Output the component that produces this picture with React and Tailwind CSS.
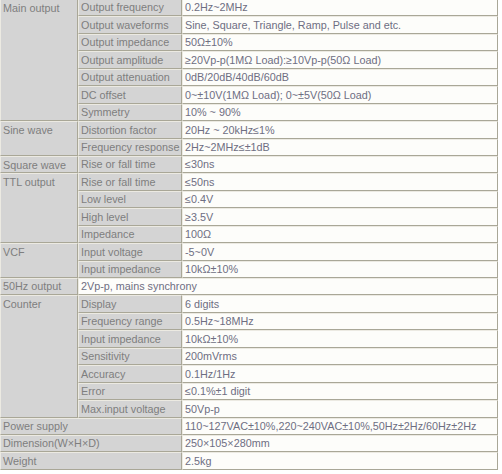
const cell =
  "border border-t-[#eceae2] border-l-[#eceae2] border-b-[#a9a797] border-r-[#a9a797] px-[2px] py-0 align-middle whitespace-nowrap overflow-hidden";
const grey = `${cell} bg-[#d4d4d4] text-[#7e7e7e]`;
const white = `${cell} bg-[#fdfdfa] text-[#6e6e82]`;

const groups = [
  {
    name: "Main output",
    rows: [
      ["Output frequency", "0.2Hz~2MHz"],
      ["Output waveforms", "Sine, Square, Triangle, Ramp, Pulse and etc."],
      ["Output impedance", "50Ω±10%"],
      ["Output amplitude", "≥20Vp-p(1MΩ Load):≥10Vp-p(50Ω Load)"],
      ["Output attenuation", "0dB/20dB/40dB/60dB"],
      ["DC offset", "0~±10V(1MΩ Load); 0~±5V(50Ω Load)"],
      ["Symmetry", "10% ~ 90%"],
    ],
  },
  {
    name: "Sine wave",
    rows: [
      ["Distortion factor", "20Hz ~ 20kHz≤1%"],
      ["Frequency response", "2Hz~2MHz≤±1dB"],
    ],
  },
  { name: "Square wave", rows: [["Rise or fall time", "≤30ns"]] },
  {
    name: "TTL output",
    rows: [
      ["Rise or fall time", "≤50ns"],
      ["Low level", "≤0.4V"],
      ["High level", "≥3.5V"],
      ["Impedance", "100Ω"],
    ],
  },
  {
    name: "VCF",
    rows: [
      ["Input voltage", "-5~0V"],
      ["Input impedance", "10kΩ±10%"],
    ],
  },
  { name: "50Hz output", wide: "2Vp-p, mains synchrony" },
  {
    name: "Counter",
    rows: [
      ["Display", "6 digits"],
      ["Frequency range", "0.5Hz~18MHz"],
      ["Input impedance", "10kΩ±10%"],
      ["Sensitivity", "200mVrms"],
      ["Accuracy", "0.1Hz/1Hz"],
      ["Error", "≤0.1%±1 digit"],
      ["Max.input voltage", "50Vp-p"],
    ],
  },
];

const bottom = [
  ["Power supply", "110~127VAC±10%,220~240VAC±10%,50Hz±2Hz/60Hz±2Hz"],
  ["Dimension(W×H×D)", "250×105×280mm"],
  ["Weight", "2.5kg"],
];

// rows share the 471px evenly, rounding to whole pixels
const PITCH = 17.44;
const rowH = (i) => Math.round(PITCH * (i + 1)) - Math.round(PITCH * i);

export default function App() {
  const trs = [];
  let n = 0;

  groups.forEach((g) => {
    if (g.wide) {
      trs.push(
        <tr key={g.name} style={{ height: rowH(n++) }}>
          <td className={grey}>{g.name}</td>
          <td colSpan={2} className={white}>
            {g.wide}
          </td>
        </tr>
      );
      return;
    }
    g.rows.forEach(([k, v], i) => {
      trs.push(
        <tr key={g.name + k} style={{ height: rowH(n++) }}>
          {i === 0 && (
            <td rowSpan={g.rows.length} className={`${grey} !align-top pt-[2px]`}>
              {g.name}
            </td>
          )}
          <td className={grey}>{k}</td>
          <td className={white}>{v}</td>
        </tr>
      );
    });
  });

  bottom.forEach(([k, v]) => {
    trs.push(
      <tr key={k} style={{ height: rowH(n++) }}>
        <td colSpan={2} className={grey}>
          {k}
        </td>
        <td className={white}>{v}</td>
      </tr>
    );
  });

  return (
    <div className="w-[502px] h-[474px] overflow-hidden bg-white">
      <table
        className="table-fixed border-separate border-spacing-0 w-[498px] -mt-[1px] text-[10.8px] leading-[13px]"
        style={{ fontFamily: '"Liberation Sans", Arial, sans-serif' }}
      >
        <colgroup>
          <col className="w-[78px]" />
          <col className="w-[104px]" />
          <col />
        </colgroup>
        <tbody>{trs}</tbody>
      </table>
    </div>
  );
}
